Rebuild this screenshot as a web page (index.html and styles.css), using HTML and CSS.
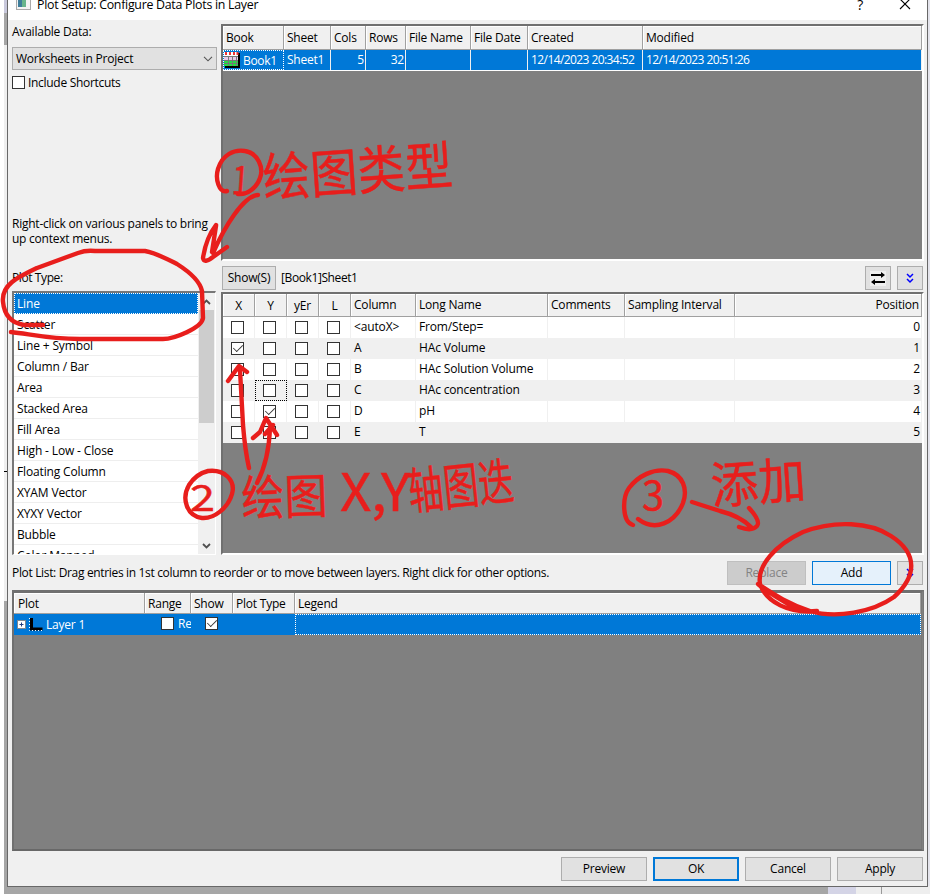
FILE: index.html
```html
<!DOCTYPE html>
<html lang="en">
<head>
<meta charset="utf-8">
<title>Plot Setup</title>
<link rel="stylesheet" href="styles.css">
</head>
<body>
<div class="desktop">
<main class="dialog">
  <header class="titlebar">
    <svg class="app-icon" width="15" height="16" viewBox="0 0 15 16"><rect x=".5" y=".5" width="14" height="15" fill="#f4f4f4" stroke="#aaa"/><rect x="2" y="2" width="4" height="11" fill="#3f7e9b"/><rect x="6" y="2" width="4" height="11" fill="#68b58c"/></svg>
    <span class="title">Plot Setup: Configure Data Plots in Layer</span>
    <span class="help">?</span>
    <svg class="close" width="12" height="12" viewBox="0 0 12 12"><path d="M1 1l10 10M11 1L1 11" stroke="#000" stroke-width="1.1"/></svg>
  </header>

  <div class="upper">
    <section class="left">
      <div class="label">Available Data:</div>
      <div class="combo">Worksheets in Project<svg width="10" height="6" viewBox="0 0 10 6"><path d="M1 .8l4 4 4-4" fill="none" stroke="#555" stroke-width="1.1"/></svg></div>
      <label class="shortcuts"><i class="cb"></i>Include Shortcuts</label>
      <p class="hint">Right-click on various panels to bring<br>up context menus.</p>
      <div class="label type-label">Plot Type:</div>
      <div class="list">
        <ul>
          <li class="sel">Line</li><li>Scatter</li><li>Line + Symbol</li><li>Column / Bar</li><li>Area</li><li>Stacked Area</li><li>Fill Area</li><li>High - Low - Close</li><li>Floating Column</li><li>XYAM Vector</li><li>XYXY Vector</li><li>Bubble</li><li>Color Mapped</li>
        </ul>
        <div class="scroll">
          <svg width="9" height="6" viewBox="0 0 9 6"><path d="M1 5l3.500-3.500L8 5" fill="none" stroke="#505050" stroke-width="1.800"/></svg>
          <i class="thumb"></i>
          <svg class="down" width="9" height="6" viewBox="0 0 9 6"><path d="M1 1l3.500 3.500L8 1" fill="none" stroke="#505050" stroke-width="1.800"/></svg>
        </div>
      </div>
    </section>

    <section class="right">
      <div class="pane books">
        <div class="row head"><span>Book</span><span>Sheet</span><span>Cols</span><span>Rows</span><span>File Name</span><span>File Date</span><span>Created</span><span>Modified</span></div>
        <div class="row picked">
          <span class="book focus"><svg width="16" height="16" viewBox="0 0 16 16"><path d="M1 1h15v15H1z" fill="#000"/><path d="M0 0h14v14H0z" fill="#eee"/><path d="M0 0h14v4H0z" fill="#fff"/><path d="M0 4h14v5H0z" fill="#e8c8e8"/><path d="M0 9h14v5H0z" fill="#22e044"/><path d="M4.500 4v10M8.500 4v10M12.500 4v10M0 4.500h14M0 8.500h14M0 11.500h14" stroke="#777"/><path d="M2 0v3M6 0v3M10 0v3M13.500 0v3" stroke="#e33" stroke-width="2"/></svg>Book1</span>
          <span>Sheet1</span><span class="num">5</span><span class="num">32</span><span></span><span></span><span class="date">12/14/2023 20:34:52</span><span class="date">12/14/2023 20:51:26</span>
        </div>
      </div>
      <div class="toolbar">
        <button class="show">Show(S)</button><span class="path">[Book1]Sheet1</span>
        <button class="mini"><svg width="16" height="15" viewBox="0 0 16 15"><path d="M0 0h16v15H0z" fill="#f0f0f0"/><path d="M1 3h10V1l4 3-4 3V5H1zM15 10H5V8l-4 3 4 3v-2h10z" fill="#000"/></svg></button>
        <button class="mini"><svg width="8" height="11" viewBox="0 0 8 11"><path d="M1 1l3 3 3-3M1 6l3 3 3-3" fill="none" stroke="#00f" stroke-width="1.500"/></svg></button>
      </div>
      <div class="pane columns">
        <div class="row head"><span>X</span><span>Y</span><span>yEr</span><span>L</span><span>Column</span><span>Long Name</span><span>Comments</span><span>Sampling Interval</span><span class="num">Position</span></div>
        <div class="row"><span><i class="cb"></i></span><span><i class="cb"></i></span><span><i class="cb"></i></span><span><i class="cb"></i></span><span>&lt;autoX&gt;</span><span>From/Step=</span><span></span><span></span><span class="num">0</span></div>
        <div class="row"><span><i class="cb on"></i></span><span><i class="cb"></i></span><span><i class="cb"></i></span><span><i class="cb"></i></span><span>A</span><span>HAc Volume</span><span></span><span></span><span class="num">1</span></div>
        <div class="row"><span><i class="cb"></i></span><span><i class="cb"></i></span><span><i class="cb"></i></span><span><i class="cb"></i></span><span>B</span><span>HAc Solution Volume</span><span></span><span></span><span class="num">2</span></div>
        <div class="row"><span><i class="cb"></i></span><span class="cellfocus"><i class="cb"></i></span><span><i class="cb"></i></span><span><i class="cb"></i></span><span>C</span><span>HAc concentration</span><span></span><span></span><span class="num">3</span></div>
        <div class="row"><span><i class="cb"></i></span><span><i class="cb on"></i></span><span><i class="cb"></i></span><span><i class="cb"></i></span><span>D</span><span>pH</span><span></span><span></span><span class="num">4</span></div>
        <div class="row"><span><i class="cb"></i></span><span><i class="cb"></i></span><span><i class="cb"></i></span><span><i class="cb"></i></span><span>E</span><span>T</span><span></span><span></span><span class="num">5</span></div>
      </div>
    </section>
  </div>

  <div class="listbar">
    <span class="listtext">Plot List: Drag entries in 1st column to reorder or to move between layers. Right click for other options.</span>
    <button class="act off">Replace</button><button class="act hot">Add</button>
    <button class="mini"><svg width="8" height="11" viewBox="0 0 8 11"><path d="M1 1l3 3 3-3M1 6l3 3 3-3" fill="none" stroke="#00f" stroke-width="1.500"/></svg></button>
  </div>

  <section class="pane plots">
    <div class="row head"><span>Plot</span><span>Range</span><span>Show</span><span>Plot Type</span><span>Legend</span></div>
    <div class="row picked">
      <span class="layer"><svg width="27" height="14" viewBox="0 0 27 14"><rect x=".5" y="2.500" width="8" height="8" fill="#fff" stroke="#7c8792"/><path d="M2.500 6.500h4M4.500 4.500v4" stroke="#223d80"/><path d="M14.500 0v11h11" fill="none" stroke="#000" stroke-width="3"/><path d="M12.500 0v12.500h14" fill="none" stroke="#fff" stroke-dasharray="1 2"/></svg>Layer 1</span>
      <span class="range"><i class="cb"></i>Re</span><span class="vis"><i class="cb on"></i></span><span></span><span class="focus"></span>
    </div>
  </section>

  <footer><button>Preview</button><button class="default">OK</button><button>Cancel</button><button>Apply</button></footer>
</main>

<svg class="ink" width="930" height="894" viewBox="0 0 930 894">
  <g class="stroke">
    <path d="M227 191C219 193 215 179 218 169C222 155 234 149 245 151C258 153 264 168 260 178C257 187 248 195 238 194"/>
    <path d="M258 195C243 196 224 228 213 253M216 225Q206 238 203 258Q204 264 213 257L227 247M216 226L212 252"/>
    <path d="M43 325H24Q5 322 3 302C1 285 18 277 37 268L78 253Q86 250 95 251H145C156 253 167 259 177 264C188 271 200 281 202 291L203 318C202 328 174 339 163 339H80C48 339 30 334 11 332"/>
    <path d="M249 468Q245 450 243 425L240 370M228 381L239 366L247 372M257 483Q269 460 270 427M253 438L260 432L266 418L277 435M273 425L265 434"/>
    <path d="M208 471C224 469 236 480 232 494C228 508 214 519 202 518C187 516 181 499 189 485Q196 474 208 471"/>
    <path d="M633 525C622 522 622 498 629 488C638 476 654 468 668 471C683 475 688 489 683 503C675 523 655 532 638 519"/>
    <path d="M692 502L720 511Q740 516 751 527M749 508Q761 521 757 526Q752 532 739 527"/>
    <path d="M817 611C789 614 766 602 760 584C757 566 775 545 803 532C835 520 870 522 891 536C919 554 916 577 894 597C873 612 836 619 810 611C786 603 772 593 758 584Q768 593 797 609"/>
  </g>
  <g class="writing">
    <text transform="translate(231 194) rotate(4)" font-size="40" textLength="17" lengthAdjust="spacingAndGlyphs">1</text>
    <text transform="translate(264 197) rotate(-4)" font-size="52" textLength="190" lengthAdjust="spacingAndGlyphs">绘图类型</text>
    <text x="190" y="511" font-size="37" textLength="25" lengthAdjust="spacingAndGlyphs">2</text>
    <text transform="translate(242 516) rotate(-2)" font-size="48" textLength="86" lengthAdjust="spacingAndGlyphs">绘图</text>
    <text x="340" y="511" font-size="52" textLength="70" lengthAdjust="spacingAndGlyphs">X,Y</text>
    <text transform="translate(410 510) rotate(-6)" font-size="50" textLength="106" lengthAdjust="spacingAndGlyphs">轴图迭</text>
    <text x="642" y="510" font-size="40" textLength="22" lengthAdjust="spacingAndGlyphs">3</text>
    <text transform="translate(712 504) rotate(-4)" font-size="50" textLength="95" lengthAdjust="spacingAndGlyphs">添加</text>
  </g>
</svg>
</div>
</body>
</html>
```
FILE: styles.css
```css
* { box-sizing: border-box; }
body { margin: 0; font: 12px/16px "Open Sans", "Noto Sans", sans-serif; letter-spacing: -.22px; color: #000; }
.desktop {
  position: relative; width: 930px; height: 894px; overflow: hidden; padding-left: 7px;
  background:
    linear-gradient(90deg, #fff 4px, transparent 4px),
    linear-gradient(#000, #000) 4px 471px / 3px 1px no-repeat,
    linear-gradient(90deg, transparent 828px, #d4d4e6 828px 856px, #eee 856px 881px, #999 881px 882px, #eee 882px) 0 886px / 930px 8px no-repeat,
    linear-gradient(#e4e4ec, #e4e4ec) 928px 0 / 2px 894px no-repeat,
    linear-gradient(#c9c9dc 13px, #a6a6a6 13px 45px, #efefef 45px 601px, #a6a6a6 601px);
}
.dialog { width: 921px; height: 887px; background: #f0f0f0; border: solid #686868; border-width: 0 1px 1px; }
.titlebar { height: 20px; display: flex; background: #fff; padding-left: 8px; }
.app-icon { margin-top: -6px; }
.title { margin: -3px auto 0 6px; letter-spacing: -.28px; font-size: 12.4px; }
.help { font-size: 14px; margin: -3px 36px 0 0; }
.close { margin: -2px 16px 0 0; }
.upper { display: grid; grid-template-columns: 205px 703px; column-gap: 4px; height: 535px; padding: 4px 0 0 4px; }
.left { display: flex; flex-direction: column; }
.label { height: 23px; }
.combo { height: 23px; background: #e1e1e1; border: 1px solid #adadad; padding: 0 3px 0 3px; display: flex; align-items: center; justify-content: space-between; }
.shortcuts { display: flex; align-items: center; gap: 3px; margin-top: 5px; height: 16px; letter-spacing: -.3px; }
.shortcuts .cb { margin-top: -1px; }
.cb { display: inline-flex; flex: none; width: 13px; height: 13px; border: 1px solid #333; background: #fff; }
.cb.on::after { content: ""; width: 9px; height: 5px; margin: 1px 0 0 1px; border: solid #333; border-width: 0 0 1.3px 1.3px; transform: rotate(-45deg) scale(.9); }
.hint { margin: 125px 0 0; line-height: 15px; white-space: nowrap; letter-spacing: -.24px; }
.type-label { margin-top: 24px; height: 21px; letter-spacing: -.4px; }
.list { height: 264px; border: 1px solid #fff; border-top: 2px solid #777; border-left: 2px solid #777; background: #fff; display: flex; width: 204px; overflow: hidden; }
ul { list-style: none; margin: 0; padding: 0; width: 184px; height: 261px; overflow: hidden; }
li { height: 21px; border-bottom: 1px solid #eee; line-height: 21px; padding-left: 3px; letter-spacing: -.15px; }
li.sel { background: #0078d7; color: #fff; border: 1px dotted #fff; line-height: 19px; padding-left: 2px; }
.scroll { width: 17px; background: #f0f0f0; display: flex; flex-direction: column; align-items: center; padding-top: 6px; margin-left: auto; }
.thumb { width: 15px; height: 113px; background: #cdcdcd; margin-top: 5px; }
.down { margin: auto 0 5px; }
.right { display: flex; flex-direction: column; }
.pane { background: #808080; border: solid #fff; border-width: 2px; border-top-color: #707070; border-left-color: #707070; }
.row { display: grid; }
.row > span { padding-left: 3px; white-space: nowrap; overflow: hidden; }
.head { background: #f0f0f0; border-bottom: 1px solid #a0a0a0; }
.head > span { border-right: 1px solid #a0a0a0; box-shadow: inset 1px 1px #fff; }
.row .num { text-align: right; padding-right: 1px; }
.picked { background: #0078d7; color: #fff; }
.books { height: 237px; }
.books .row { grid-template-columns: 61px 47px 35px 40px 65px 57px 115px 279px; }
.books .head { height: 24px; line-height: 23px; }
.books .picked { height: 21px; line-height: 19px; border-bottom: 1px solid #fff; }
.books .picked > span { border-right: 1px solid #f0f0f0; }
.row .book { display: flex; align-items: center; gap: 3px; padding: 0; }
.books .picked .focus { border: 1px dotted #fff; letter-spacing: -.3px; }
.row .date { letter-spacing: -.58px; }
.toolbar { display: flex; height: 31px; padding: 5px 2px 0 1px; line-height: 24px; }
button { font: inherit; letter-spacing: inherit; color: #000; background: #e1e1e1; border: 1px solid #adadad; padding: 0; height: 24px; display: flex; align-items: center; justify-content: center; }
.show { width: 54px; }
.path { margin: 0 auto 0 5px; letter-spacing: -.4px; }
.mini { width: 26px; margin-left: 6px; }
.toolbar .mini { position: relative; left: 1px; }
.columns { height: 263px; }
.columns .row { grid-template-columns: 32px 32px 32px 32px 65px 132px 77px 110px 187px; height: 21px; line-height: 20px; background: #fff; letter-spacing: -.15px; }
.columns .row:nth-child(odd) { background: #f0f0f0; }
.columns .row > span { border-right: 1px solid #f0f0f0; }
.columns .row > span:nth-child(-n+4) { display: flex; align-items: center; padding: 0 0 1px 8px; }
.columns .row.head { height: 23px; line-height: 21px; background: #f0f0f0; letter-spacing: -.2px; }
.columns .row.head > span:nth-child(-n+4) { justify-content: center; padding: 0; }
.columns .row.head > span { border-right-color: #a0a0a0; }
.columns .head .num { padding-right: 2px; }
.columns .row > .cellfocus { border: 1px dotted #000; padding-bottom: 0 !important; padding-left: 7px !important; }
.listbar { display: flex; height: 35px; padding: 6px 4px 0 4px; line-height: 24px; }
.listtext { margin-right: auto; white-space: nowrap; letter-spacing: -.34px; }
.act { width: 79px; margin-left: 6px; }
.off { background: #ccc; border-color: #bfbfbf; color: #838383; }
.hot { background: #e5f1fb; border-color: #0078d7; }
.plots { margin-left: 4px; width: 912px; height: 261px; border-width: 3px 3px 2px 2px; border-style: solid double solid solid; border-bottom-color: #686868; border-right-color: #777; }
.plots .row { grid-template-columns: 131px 46px 42px 62px 626px; }
.plots .head > span:first-child { padding-left: 4px; }
.plots .head { height: 21px; line-height: 21px; }
.plots .picked { height: 21px; line-height: 20px; }
.row .layer { display: flex; align-items: center; gap: 2px; }
.plots .range { display: flex; align-items: center; gap: 4px; padding: 0 0 2px 16px; }
.plots .vis { display: flex; align-items: center; padding: 0 0 2px 14px; }
.plots .focus { border: 1px dotted #fff; }
footer { display: flex; justify-content: flex-end; gap: 6px; padding: 6px 4px 0 0; }
footer button { width: 86px; }
footer .default { border: 2px solid #0078d7; }
.ink { position: absolute; left: 0; top: 0; pointer-events: none; }
.stroke { fill: none; stroke: #e81e1c; stroke-width: 4.4; stroke-linecap: round; stroke-linejoin: round; }
.writing { fill: #e81e1c; stroke: #e81e1c; stroke-width: .5; font-family: "Noto Sans CJK SC", sans-serif; letter-spacing: 0; }
```
